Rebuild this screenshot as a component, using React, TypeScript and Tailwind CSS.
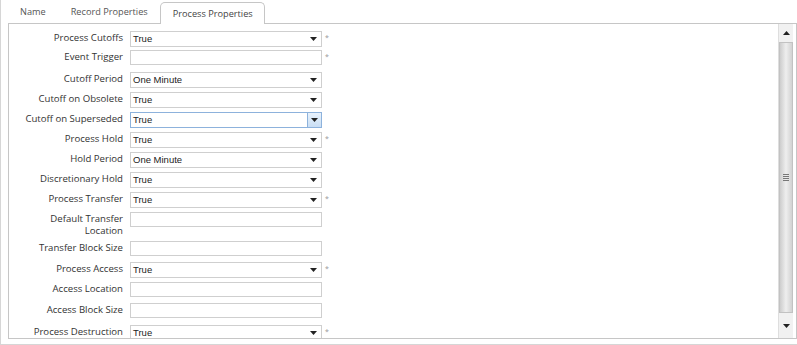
import React from "react";

type Row = {
  label: string;
  kind: "select" | "text";
  value?: string;
  required?: boolean;
  focused?: boolean;
  h: number;
};

/** Form rows in display order; h is the row pitch in px. */
const ROWS: Row[] = [
  { label: "Process Cutoffs", kind: "select", value: "True", required: true, h: 19 },
  { label: "Event Trigger", kind: "text", required: true, h: 22 },
  { label: "Cutoff Period", kind: "select", value: "One Minute", h: 20 },
  { label: "Cutoff on Obsolete", kind: "select", value: "True", h: 20 },
  { label: "Cutoff on Superseded", kind: "select", value: "True", focused: true, h: 20 },
  { label: "Process Hold", kind: "select", value: "True", required: true, h: 20 },
  { label: "Hold Period", kind: "select", value: "One Minute", h: 20 },
  { label: "Discretionary Hold", kind: "select", value: "True", h: 20 },
  { label: "Process Transfer", kind: "select", value: "True", required: true, h: 20 },
  { label: "Default Transfer\nLocation", kind: "text", h: 29 },
  { label: "Transfer Block Size", kind: "text", h: 21 },
  { label: "Process Access", kind: "select", value: "True", required: true, h: 20 },
  { label: "Access Location", kind: "text", h: 21 },
  { label: "Access Block Size", kind: "text", h: 22 },
  { label: "Process Destruction", kind: "select", value: "True", required: true, h: 20 },
];

const LABEL_FONT = "font-['Open_Sans','Liberation_Sans',sans-serif]";
const VALUE_FONT = "font-['Liberation_Sans','Arial',sans-serif]";

function Arrow({ up = false }: { up?: boolean }) {
  return (
    <svg width="7" height="4" viewBox="0 0 7 4" className="block">
      <polygon points={up ? "0,4 7,4 3.5,0" : "0,0 7,0 3.5,4"} fill="#222" />
    </svg>
  );
}

function SelectBox({ value, focused }: { value: string; focused?: boolean }) {
  if (focused) {
    return (
      <div className="flex h-[16px] w-[192px] items-stretch border border-[#8db2dc] bg-white">
        <span className={`flex-1 pl-[2px] text-[9.5px] leading-[14px] text-[#222] ${VALUE_FONT}`}>{value}</span>
        <span className="flex w-[14px] items-center justify-center border-l border-[#8db2dc] bg-gradient-to-b from-[#e8f2fc] to-[#c9def4]">
          <Arrow />
        </span>
      </div>
    );
  }
  return (
    <div className="flex h-[16px] w-[192px] items-center border border-[#cfcfcf] bg-white pr-[4px]">
      <span className={`flex-1 pl-[2px] text-[9.5px] leading-[14px] text-[#222] ${VALUE_FONT}`}>{value}</span>
      <Arrow />
    </div>
  );
}

function FormRow({ row }: { row: Row }) {
  return (
    <div className="flex items-start" style={{ height: row.h }}>
      <label
        className={`w-[114px] shrink-0 whitespace-pre-line pt-[1px] text-right text-[9.6px] leading-[12px] text-[#333] ${LABEL_FONT}`}
      >
        {row.label}
      </label>
      <div className="ml-[7px] flex items-start">
        {row.kind === "select" ? (
          <SelectBox value={row.value ?? ""} focused={row.focused} />
        ) : (
          <div className="h-[15px] w-[192px] border border-[#cfcfcf] bg-white" />
        )}
        {row.required && (
          <span className="ml-[3px] mt-[3px] text-[7px] leading-[7px] text-[#999]">*</span>
        )}
      </div>
    </div>
  );
}

function ScrollBar() {
  return (
    <div className="mr-[3px] flex w-[15px] shrink-0 flex-col border-l border-[#dedede] bg-[#f1f1f1]">
      <div className="flex h-[18px] items-center justify-center">
        <Arrow up />
      </div>
      <div className="flex h-[271px] items-center justify-center border border-[#c2c2c2] bg-gradient-to-r from-[#cdcdcd] via-[#eeeeee] to-[#d2d2d2]">
        <div className="flex w-[6px] flex-col gap-[1px]">
          <div className="h-px bg-[#777]" />
          <div className="h-px bg-[#777]" />
          <div className="h-px bg-[#777]" />
          <div className="h-px bg-[#777]" />
        </div>
      </div>
      <div className="flex flex-1 items-center justify-center">
        <Arrow />
      </div>
    </div>
  );
}

export default function App() {
  return (
    <div className="h-[345px] w-[797px] border-b border-l border-[#d6d6d6] bg-white">
      {/* Tabs */}
      <div className={`flex h-[23px] items-end pl-[7px] text-[9.2px] ${LABEL_FONT}`}>
        <div className="flex h-[22px] items-center pl-[12px] pr-[12px] text-[#555]">Name</div>
        <div className="flex h-[22px] items-center pl-[13px] pr-[12px] text-[#555]">Record Properties</div>
        <div className="relative z-10 -mb-px flex h-[22px] items-center rounded-t-[5px] border border-b-0 border-[#c6c6c6] bg-white pl-[12px] pr-[11px] text-[#444]">
          Process Properties
        </div>
      </div>

      {/* Content */}
      <div className="ml-[7px] flex h-[316px] border border-[#c6c6c6] bg-white">
        <div className="flex-1 overflow-hidden pt-[7px]">
          {ROWS.map((row) => (
            <FormRow key={row.label} row={row} />
          ))}
        </div>
        <ScrollBar />
      </div>
    </div>
  );
}
